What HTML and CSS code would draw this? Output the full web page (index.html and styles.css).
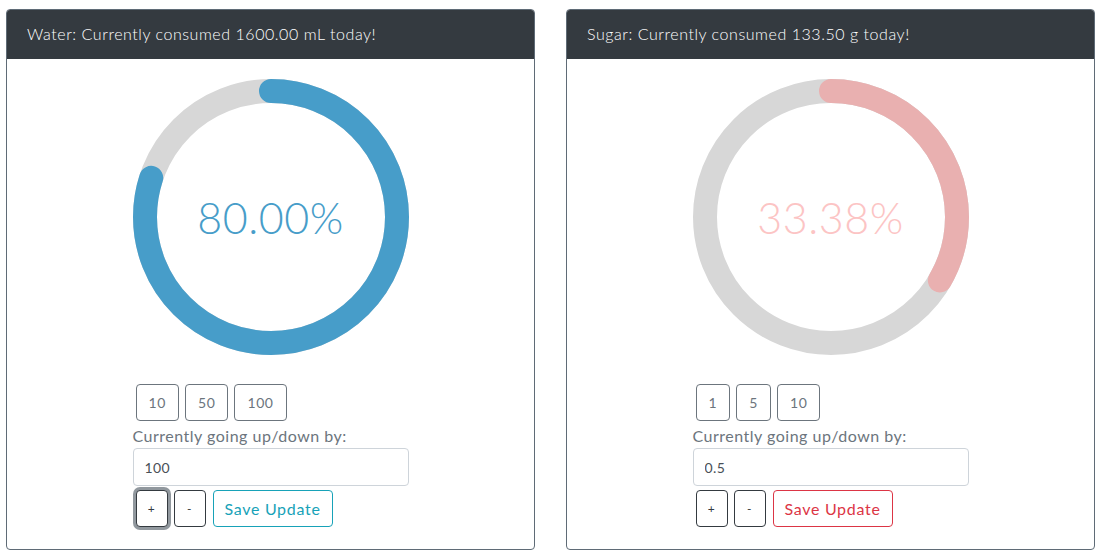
FILE: index.html
```html
<!DOCTYPE html>
<html>
<head>
<meta charset="utf-8">
<link rel="stylesheet" href="styles.css">
</head>
<body>
<div class="page">
  <section class="card">
    <div class="card-header">Water: Currently consumed 1600.00 mL today!</div>
    <div class="card-body">
      <div class="column">
        <div class="gauge">
          <svg class="ring" width="276" height="276" viewBox="0 0 276 276">
            <circle cx="138" cy="138" r="126" fill="none" stroke="#d7d7d7" stroke-width="24"/>
            <circle cx="138" cy="138" r="126" fill="none" stroke="#479dc9" stroke-width="24" stroke-linecap="round" stroke-dasharray="633.35 1000" transform="rotate(-90 138 138)"/>
          </svg>
          <div class="pct pct-water">80.00%</div>
        </div>
        <div class="quick">
          <button class="btn btn-secondary-outline">10</button>
          <button class="btn btn-secondary-outline">50</button>
          <button class="btn btn-secondary-outline">100</button>
        </div>
        <label class="label">Currently going up/down by:</label>
        <input class="input" type="text" value="100">
        <div class="actions">
          <button class="btn btn-dark-outline btn-small focused">+</button>
          <button class="btn btn-dark-outline btn-small">-</button>
          <button class="btn btn-info-outline">Save Update</button>
        </div>
      </div>
    </div>
  </section>
  <section class="card">
    <div class="card-header">Sugar: Currently consumed 133.50 g today!</div>
    <div class="card-body">
      <div class="column">
        <div class="gauge">
          <svg class="ring" width="276" height="276" viewBox="0 0 276 276">
            <circle cx="138" cy="138" r="126" fill="none" stroke="#d7d7d7" stroke-width="24"/>
            <circle cx="138" cy="138" r="126" fill="none" stroke="#e9b0b0" stroke-width="24" stroke-linecap="round" stroke-dasharray="264.26 1000" transform="rotate(-90 138 138)"/>
          </svg>
          <div class="pct pct-sugar">33.38%</div>
        </div>
        <div class="quick">
          <button class="btn btn-secondary-outline">1</button>
          <button class="btn btn-secondary-outline">5</button>
          <button class="btn btn-secondary-outline">10</button>
        </div>
        <label class="label">Currently going up/down by:</label>
        <input class="input" type="text" value="0.5">
        <div class="actions">
          <button class="btn btn-dark-outline btn-small">+</button>
          <button class="btn btn-dark-outline btn-small">-</button>
          <button class="btn btn-danger-outline">Save Update</button>
        </div>
      </div>
    </div>
  </section>
</div>
</body>
</html>
```
FILE: styles.css
```css
* { box-sizing: border-box; }
html, body { margin: 0; padding: 0; background: #fff; }
body {
  font-family: "Lato", "Open Sans", sans-serif;
  color: #212529;
}
.page {
  display: flex;
  gap: 31px;
  padding: 9px 0 0 6px;
}
.card {
  width: 529px;
  border: 1px solid #5f6b76;
  border-radius: 4px;
  overflow: hidden;
  background: #fff;
}
.card-header {
  background: #343a40;
  color: #fff;
  height: 49px;
  padding: 12px 20px;
  font-size: 16px;
  font-weight: 300;
  line-height: 24px;
  letter-spacing: 0.55px;
}
.card-body {
  padding: 20px 0 22px;
  display: flex;
  justify-content: center;
}
.column {
  width: 276px;
  display: flex;
  flex-direction: column;
}
.gauge {
  display: grid;
  width: 276px;
  height: 276px;
}
.gauge > * { grid-area: 1 / 1; }
.ring { display: block; }
.pct {
  align-self: center;
  justify-self: center;
  font-size: 43px;
  font-weight: 300;
  letter-spacing: 0.5px;
  line-height: 1;
}
.pct-water { color: #479dc9; }
.pct-sugar { color: #fcc4c4; }
.quick {
  display: flex;
  gap: 6px;
  margin: 29px 0 0 3px;
}
.btn {
  font-family: inherit;
  background: #fff;
  border: 1px solid;
  border-radius: 4px;
  padding: 6px 12px;
  line-height: 23px;
  height: 37px;
  font-size: 14px;
  letter-spacing: 0.6px;
  cursor: pointer;
}
.btn-secondary-outline { border-color: #6c757d; color: #6c757d; }
.btn-dark-outline { border-color: #343a40; color: #343a40; }
.btn-small { font-size: 12px; width: 32px; padding: 6px 0; }
.btn-info-outline { border-color: #17a2b8; color: #17a2b8; font-size: 16px; width: 120px; padding: 6px 0; letter-spacing: 0.7px; }
.btn-danger-outline { border-color: #dc3545; color: #dc3545; font-size: 16px; width: 120px; padding: 6px 0; letter-spacing: 0.7px; }
.focused { box-shadow: 0 0 0 3px rgba(108, 117, 125, 0.75); }
.label {
  display: block;
  margin-top: 3px;
  line-height: 24px;
  font-size: 16px;
  color: #6c757d;
  letter-spacing: 0.5px;
}
.input {
  display: block;
  width: 276px;
  height: 38px;
  border: 1px solid #ced4da;
  border-radius: 4px;
  padding: 6px 11px;
  font-family: inherit;
  font-size: 14px;
  color: #495057;
  letter-spacing: 0.4px;
}
.actions {
  display: flex;
  gap: 6px;
  margin: 4px 0 0 3px;
}
.actions .btn-info-outline, .actions .btn-danger-outline { margin-left: 1px; }
```
